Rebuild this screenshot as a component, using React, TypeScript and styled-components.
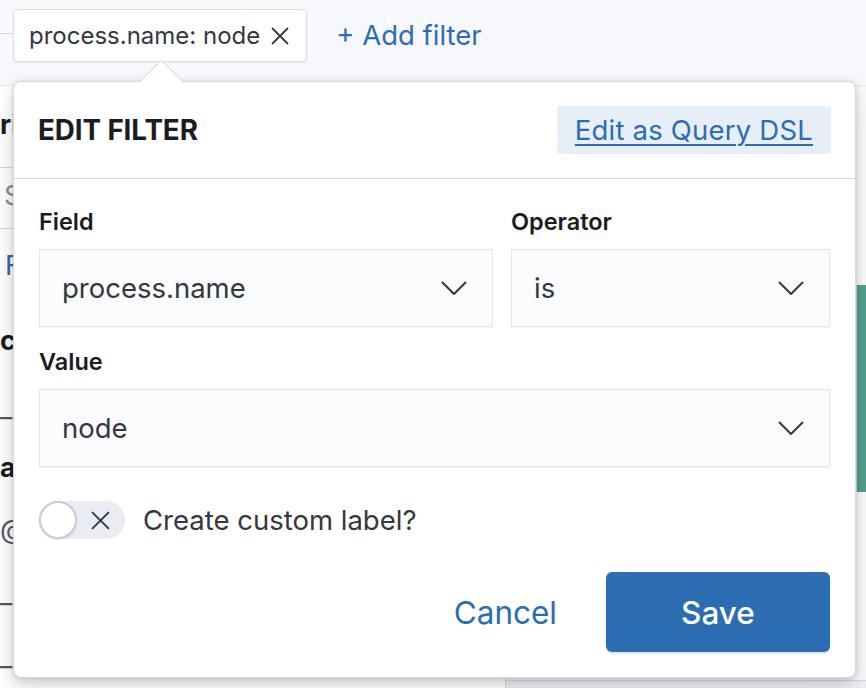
import React from "react";
import styled, { createGlobalStyle } from "styled-components";

const GlobalStyle = createGlobalStyle`
  html, body { margin: 0; padding: 0; background: #ffffff; }
  body { font-family: Inter, "Noto Sans", "Liberation Sans", sans-serif; -webkit-font-smoothing: antialiased; }
  * { box-sizing: border-box; }
`;

const Page = styled.div`
  position: relative;
  width: 866px;
  height: 688px;
  overflow: hidden;
  display: flex;
  flex-direction: column;
  background: #ffffff;
`;

const TopBar = styled.div`
  height: 86px;
  flex: none;
  display: flex;
  align-items: flex-start;
  padding-top: 9px;
  background: #f7f8fc;
  border-bottom: 1px solid #e3e7ef;
`;

const LeadLine = styled.div`
  width: 13px;
  height: 1px;
  margin-top: 24px;
  background: #d3dae6;
`;

const FilterPill = styled.div`
  height: 53px;
  display: flex;
  align-items: center;
  gap: 11px;
  padding: 0 17px 0 15px;
  background: #ffffff;
  border: 1px solid #d9dee8;
  border-radius: 4px;
  box-shadow: 0 1px 2px rgba(0, 0, 0, 0.06);
  font-size: 24px;
  color: #343741;
`;

const AddFilter = styled.div`
  margin-left: 29px;
  line-height: 53px;
  font-size: 27.5px;
  color: #2c6db1;
`;

const Main = styled.div`
  flex: 1;
  display: flex;
  min-height: 0;
`;

const Sidebar = styled.div`
  width: 505px;
  flex: none;
  display: flex;
  flex-direction: column;
  background: #ffffff;
`;

const SideItem = styled.div<{ $h: number; $lh?: number; $tone: "bold" | "muted" | "link" | "plain"; $indent?: number; $line?: boolean }>`
  height: ${(p) => p.$h}px;
  line-height: ${(p) => p.$lh ?? p.$h}px;
  padding-left: ${(p) => p.$indent ?? 0}px;
  font-size: 27px;
  white-space: nowrap;
  overflow: hidden;
  font-weight: ${(p) => (p.$tone === "bold" ? 700 : 400)};
  color: ${(p) =>
    p.$tone === "bold" ? "#1a1c21" : p.$tone === "muted" ? "#8a8f99" : p.$tone === "link" ? "#2c6db1" : "#535966"};
  border-bottom: ${(p) => (p.$line ? "1px solid #d3dae6" : "none")};
`;

const Content = styled.div`
  flex: 1;
  display: flex;
  flex-direction: column;
  border-left: 1px solid #d3dae6;
  background: #ffffff;
`;

const ChartArea = styled.div`
  flex: 1;
  display: flex;
  justify-content: flex-end;
  padding-top: 199px;
  border-bottom: 1px solid #d3dae6;
  background: #f9fafc;
`;

const GreenBar = styled.div`
  width: 10px;
  height: 207px;
  background: #54a08f;
  border-left: 1px solid #d7dbe3;
`;

const ContentFoot = styled.div`
  height: 7px;
  background: #eef0f4;
`;

/* Popover */
const Popover = styled.div`
  position: absolute;
  left: 13px;
  top: 81px;
  width: 843px;
  height: 597px;
  background: #ffffff;
  border: 1px solid #d3dae6;
  border-radius: 8px;
  box-shadow: 0 1px 5px rgba(0, 0, 0, 0.12), 0 3.6px 13px rgba(0, 0, 0, 0.08),
    0 8.4px 23px rgba(0, 0, 0, 0.06), 0 23px 35px rgba(0, 0, 0, 0.05);
  display: flex;
  flex-direction: column;
`;

const Arrow = styled.div`
  position: absolute;
  top: -16px;
  left: 132px;
  width: 31px;
  height: 31px;
  background: #ffffff;
  border-top: 1px solid #d3dae6;
  border-left: 1px solid #d3dae6;
  transform: rotate(45deg);
`;

const Header = styled.div`
  display: flex;
  align-items: center;
  justify-content: space-between;
  padding: 24px 25px 24px 24px;
  border-bottom: 1px solid #d3dae6;
`;

const Title = styled.h2`
  margin: 0;
  font-size: 27.8px;
  font-weight: 700;
  color: #1a1c21;
  letter-spacing: -0.1px;
`;

const DslLink = styled.div`
  height: 48px;
  display: flex;
  align-items: center;
  padding: 0 18px;
  margin-right: -1px;
  background: #e6eef7;
  border-radius: 2px;
  font-size: 27.5px;
  letter-spacing: 0.2px;
  color: #2c6db1;
  text-decoration: underline;
  text-underline-offset: 4px;
  text-decoration-thickness: 2px;
`;

const Body = styled.div`
  flex: 1;
  display: flex;
  flex-direction: column;
  padding: 25px 25px 25px;
`;

const FieldRow = styled.div`
  display: grid;
  grid-template-columns: 454px 1fr;
  column-gap: 18px;
`;

const FormRow = styled.div<{ $mt?: number }>`
  display: flex;
  flex-direction: column;
  margin-top: ${(p) => p.$mt ?? 0}px;
`;

const Label = styled.div`
  height: 36px;
  line-height: 36px;
  margin-bottom: 9px;
  font-size: 23.5px;
  font-weight: 600;
  color: #1a1c21;
`;

const Select = styled.div`
  height: 78px;
  display: flex;
  align-items: center;
  justify-content: space-between;
  padding: 0 25px 0 22px;
  background: #fbfcfd;
  border: 1px solid #e3e6ee;
  box-shadow: 0 1px 1px rgba(0, 0, 0, 0.04);
  font-size: 27.5px;
  color: #343741;
`;

const SwitchRow = styled.div`
  display: flex;
  align-items: center;
  gap: 18px;
  margin-top: 34px;
`;

const SwitchTrack = styled.div`
  position: relative;
  width: 86px;
  height: 38px;
  border-radius: 19px;
  background: #e9edf3;
  display: flex;
  align-items: center;
  justify-content: flex-end;
  padding-right: 15px;
`;

const SwitchKnob = styled.div`
  position: absolute;
  left: 0;
  top: 0;
  width: 38px;
  height: 38px;
  border-radius: 50%;
  background: #ffffff;
  border: 2px solid #c9ccd2;
  box-shadow: 0 1px 2px rgba(0, 0, 0, 0.08);
`;

const SwitchLabel = styled.div`
  font-size: 27.5px;
  color: #343741;
`;

const Footer = styled.div`
  display: flex;
  justify-content: flex-end;
  align-items: center;
  margin-top: 33px;
`;

const CancelButton = styled.div`
  height: 80px;
  display: flex;
  align-items: center;
  padding: 0 25px;
  margin-right: 24px;
  font-size: 31.5px;
  color: #2c6db1;
`;

const SaveButton = styled.div`
  width: 224px;
  height: 80px;
  display: flex;
  align-items: center;
  justify-content: center;
  border-radius: 6px;
  background: #2c6db1;
  color: #ffffff;
  font-size: 31.5px;
  font-weight: 500;
  box-shadow: 0 2px 3px rgba(0, 0, 0, 0.12);
`;

const Chevron = () => (
  <svg width="26" height="15" viewBox="0 0 26 15" fill="none">
    <path d="M1.5 1.5 L13 13 L24.5 1.5" stroke="#343741" strokeWidth="2" strokeLinecap="round" strokeLinejoin="round" />
  </svg>
);

const Cross = ({ size, color }: { size: number; color: string }) => (
  <svg width={size} height={size} viewBox="0 0 18 18" fill="none">
    <path d="M1.5 1.5 L16.5 16.5 M16.5 1.5 L1.5 16.5" stroke={color} strokeWidth="1.8" strokeLinecap="round" />
  </svg>
);

export default function App() {
  return (
    <>
      <GlobalStyle />
      <Page>
        <TopBar>
          <LeadLine />
          <FilterPill>
            <span>process.name: node</span>
            <Cross size={18} color="#343741" />
          </FilterPill>
          <AddFilter>+ Add filter</AddFilter>
        </TopBar>
        <Main>
          <Sidebar>
            <SideItem $h={84} $lh={78} $tone="bold" $line>ri</SideItem>
            <SideItem $h={62} $lh={56} $tone="muted" $indent={4} $line>S</SideItem>
            <SideItem $h={74} $tone="link" $indent={5}>F</SideItem>
            <SideItem $h={76} $lh={80} $tone="bold">ct</SideItem>
            <SideItem $h={60} $lh={66} $tone="plain">_s</SideItem>
            <SideItem $h={64} $lh={68} $tone="bold">a</SideItem>
            <SideItem $h={66} $lh={68} $tone="plain">@</SideItem>
            <SideItem $h={64} $lh={66} $tone="plain">_i</SideItem>
            <SideItem $h={66} $lh={66} $tone="plain">_i</SideItem>
          </Sidebar>
          <Content>
            <ChartArea>
              <GreenBar />
            </ChartArea>
            <ContentFoot />
          </Content>
        </Main>

        <Popover>
          <Arrow />
          <Header>
            <Title>EDIT FILTER</Title>
            <DslLink>Edit as Query DSL</DslLink>
          </Header>
          <Body>
            <FieldRow>
              <FormRow>
                <Label>Field</Label>
                <Select>
                  <span>process.name</span>
                  <Chevron />
                </Select>
              </FormRow>
              <FormRow>
                <Label>Operator</Label>
                <Select>
                  <span>is</span>
                  <Chevron />
                </Select>
              </FormRow>
            </FieldRow>
            <FormRow $mt={17}>
              <Label>Value</Label>
              <Select>
                <span>node</span>
                <Chevron />
              </Select>
            </FormRow>
            <SwitchRow>
              <SwitchTrack>
                <SwitchKnob />
                <Cross size={19} color="#343741" />
              </SwitchTrack>
              <SwitchLabel>Create custom label?</SwitchLabel>
            </SwitchRow>
            <Footer>
              <CancelButton>Cancel</CancelButton>
              <SaveButton>Save</SaveButton>
            </Footer>
          </Body>
        </Popover>
      </Page>
    </>
  );
}
